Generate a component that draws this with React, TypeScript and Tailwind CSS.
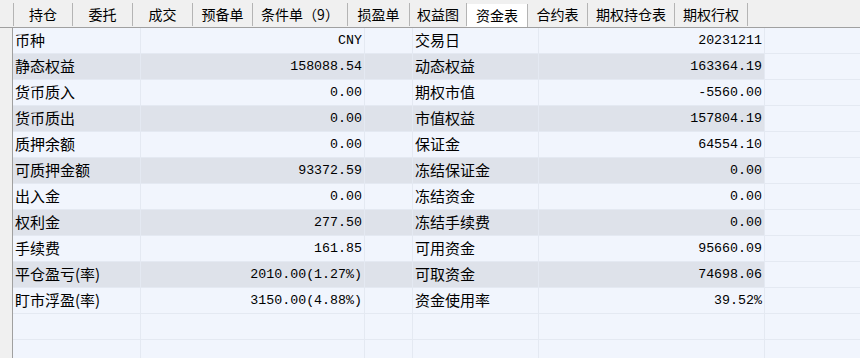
const tabs = [
  { label: '持仓', w: 'w-[60px]' },
  { label: '委托', w: 'w-[60px]' },
  { label: '成交', w: 'w-[60px]' },
  { label: '预备单', w: 'w-[60px]' },
  { label: '条件单（9）', w: 'w-[95px]' },
  { label: '损盈单', w: 'w-[62px]' },
  { label: '权益图', w: 'w-[57px]' },
  { label: '资金表', w: 'w-[61px]', active: true },
  { label: '合约表', w: 'w-[60px]' },
  { label: '期权持仓表', w: 'w-[87px]' },
  { label: '期权行权', w: 'w-[73px]' },
];

const rows: [string, string, string, string][] = [
  ['币种', 'CNY', '交易日', '20231211'],
  ['静态权益', '158088.54', '动态权益', '163364.19'],
  ['货币质入', '0.00', '期权市值', '-5560.00'],
  ['货币质出', '0.00', '市值权益', '157804.19'],
  ['质押余额', '0.00', '保证金', '64554.10'],
  ['可质押金额', '93372.59', '冻结保证金', '0.00'],
  ['出入金', '0.00', '冻结资金', '0.00'],
  ['权利金', '277.50', '冻结手续费', '0.00'],
  ['手续费', '161.85', '可用资金', '95660.09'],
  ['平仓盈亏(率)', '2010.00(1.27%)', '可取资金', '74698.06'],
  ['盯市浮盈(率)', '3150.00(4.88%)', '资金使用率', '39.52%'],
  ['', '', '', ''],
  ['', '', '', ''],
];

const cjk = "font-['Noto_Sans_CJK_SC',sans-serif]";
const mono = "font-['Liberation_Mono',monospace]";

const App = () => {
  return (
    <div className="w-[860px] h-[358px] overflow-hidden bg-[#f0f0f0] text-black">
      {/* Tab strip */}
      <div className="h-[28px] flex items-end border-b border-[#a0a0a0] pl-[13px]">
        {tabs.map(t => (
          <div
            key={t.label}
            className={`${t.w} h-[23px] flex items-center justify-center text-[14px] leading-none ${cjk} ${
              t.active ? 'bg-white' : 'mb-px'
            } border-r border-[#b4b4b4] ${t.label === '持仓' ? 'border-l' : ''}`}
          >
            <span className="-mt-[2px]">{t.label}</span>
          </div>
        ))}
      </div>

      {/* Fund table */}
      <div className="ml-[12px] border-l border-[#a0a0a0] bg-[#f1f5fd]">
        {rows.map((r, i) => {
          const shade = i % 2 === 1 && r[0] !== '';
          const cell = `h-[26px] border-b border-r border-[#e4e9f2] flex items-center ${shade ? 'bg-[#dee2ea]' : ''}`;
          return (
            <div key={i} className="grid grid-cols-[128px_224px_48px_126px_226px_1fr]">
              <div className={`${cell} pl-[2px] text-[15px] ${cjk}`}>{r[0]}</div>
              <div className={`${cell} justify-end pr-[2px] text-[13.3px] ${mono}`}>{r[1]}</div>
              <div className={cell}></div>
              <div className={`${cell} pl-[2px] text-[15px] ${cjk}`}>{r[2]}</div>
              <div className={`${cell} justify-end pr-[2px] text-[13.3px] ${mono}`}>{r[3]}</div>
              <div className="h-[26px] border-b border-[#e4e9f2]"></div>
            </div>
          );
        })}
      </div>
    </div>
  );
};

export default App;
